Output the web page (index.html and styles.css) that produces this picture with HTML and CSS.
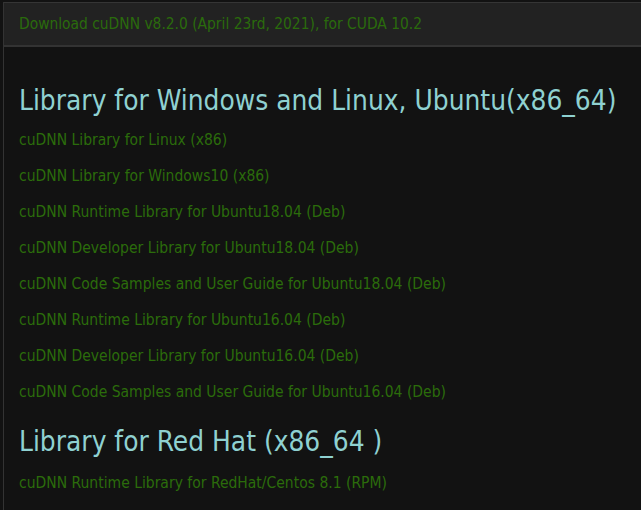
FILE: index.html
```html
<!DOCTYPE html>
<html>
<head>
<meta charset="utf-8">
<link rel="stylesheet" href="styles.css">
</head>
<body>
<div class="panel">
  <div class="panel-header">Download cuDNN v8.2.0 (April 23rd, 2021), for CUDA 10.2</div>
  <div class="panel-body">
    <h3 class="section-title first">Library for Windows and Linux, Ubuntu(x86_64)</h3>
    <a class="dl" href="#">cuDNN Library for Linux (x86)</a>
    <a class="dl" href="#">cuDNN Library for Windows10 (x86)</a>
    <a class="dl" href="#">cuDNN Runtime Library for Ubuntu18.04 (Deb)</a>
    <a class="dl" href="#">cuDNN Developer Library for Ubuntu18.04 (Deb)</a>
    <a class="dl" href="#">cuDNN Code Samples and User Guide for Ubuntu18.04 (Deb)</a>
    <a class="dl" href="#">cuDNN Runtime Library for Ubuntu16.04 (Deb)</a>
    <a class="dl" href="#">cuDNN Developer Library for Ubuntu16.04 (Deb)</a>
    <a class="dl" href="#">cuDNN Code Samples and User Guide for Ubuntu16.04 (Deb)</a>
    <h3 class="section-title">Library for Red Hat (x86_64 )</h3>
    <a class="dl" href="#">cuDNN Runtime Library for RedHat/Centos 8.1 (RPM)</a>
  </div>
</div>
</body>
</html>
```

FILE: styles.css
```css
html, body {
  margin: 0;
  padding: 0;
  background: #121212;
  height: 100%;
  overflow: hidden;
}
body {
  font-family: "DejaVu Sans Condensed", "DejaVu Sans", sans-serif;
}
.panel {
  margin: 2px 0 0 3px;
  border-left: 1px solid #333;
  min-height: 600px;
}
.panel-header {
  background: #222;
  border-top: 1px solid #353535;
  border-bottom: 2px solid #333;
  height: 42px;
  line-height: 42px;
  padding-left: 15px;
  color: #2a6b0c;
  font-size: 15.4px;
}
.panel-body {
  padding: 0 0 0 15px;
}
.section-title {
  margin: 0 0 5px 0;
  color: #8fd1d1;
  font-weight: normal;
  font-size: 27.8px;
  line-height: 36px;
  padding-top: 14px;
  white-space: nowrap;
}
.section-title.first {
  padding-top: 36px;
  margin-bottom: 3px;
}
.dl {
  display: block;
  color: #2b6c0b;
  text-decoration: none;
  font-size: 15.5px;
  line-height: 36px;
}
```
